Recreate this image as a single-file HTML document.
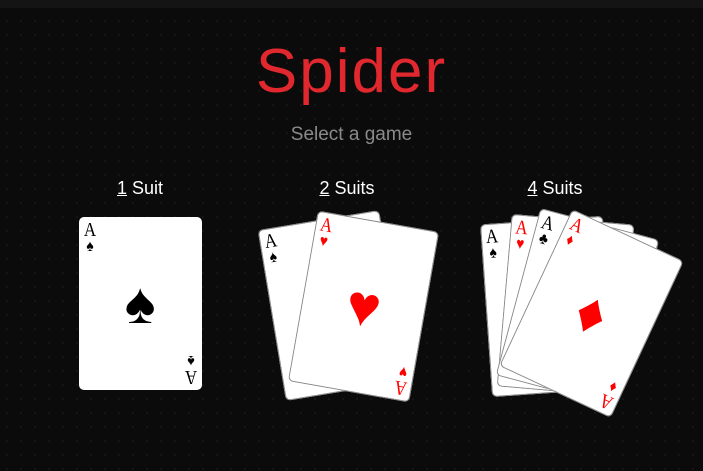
<!DOCTYPE html>
<html><head><meta charset="utf-8"><style>
html,body{margin:0;padding:0}
body{width:703px;height:471px;background:#0b0b0b;position:relative;overflow:hidden;font-family:"Liberation Sans",sans-serif;
background-image:radial-gradient(#161616 1px,transparent 1.2px);background-size:14px 14px}
.top{position:absolute;left:0;top:0;width:703px;height:8px;background:#141414}
h1{position:absolute;left:0;width:703px;top:36px;margin:0;text-align:center;color:#e0282e;font-size:62px;font-weight:normal;letter-spacing:2px}
.sub{position:absolute;left:0;width:703px;top:124px;text-align:center;color:#8a8a8a;font-size:19px}
.lbl{position:absolute;top:178px;width:140px;text-align:center;color:#fff;font-size:18px}
.lbl u{text-decoration:underline}
.card{position:absolute;width:123px;height:173px;margin-left:-61.5px;margin-top:-86.5px;background:#fff;border-radius:5px;box-shadow:0 0 0 1px #888 inset}
.c{position:absolute;left:3px;top:4px;font-family:"Liberation Serif",serif;font-size:20px;line-height:18px;text-align:center;width:16px;transform:scaleX(0.85)}
.c span{display:block;font-size:16px;line-height:16px}
.c.b{left:auto;top:auto;right:3px;bottom:4px;transform:rotate(180deg) scaleX(0.85)}
.m{position:absolute;left:0;top:0;width:123px;height:173px;line-height:173px;text-align:center;font-size:58px}
.r{color:#f00}.k{color:#000}
</style></head><body>
<div class="top"></div>
<h1>Spider</h1>
<div class="sub">Select a game</div>
<div class="lbl" style="left:70px"><u>1</u> Suit</div>
<div class="lbl" style="left:277px"><u>2</u> Suits</div>
<div class="lbl" style="left:485px"><u>4</u> Suits</div>

<div class="card k" style="left:140px;top:303.5px;box-shadow:none"><div class="c">A<span>♠</span></div><div class="m">♠</div><div class="c b">A<span>♠</span></div></div>

<div class="card k" style="left:332px;top:305px;transform:rotate(-9.4deg)"><div class="c">A<span>♠</span></div><div class="m">♠</div><div class="c b">A<span>♠</span></div></div>
<div class="card r" style="left:363px;top:306px;transform:rotate(10deg)"><div class="c">A<span>♥</span></div><div class="m">♥</div><div class="c b">A<span>♥</span></div></div>

<div class="card k" style="left:547px;top:306px;transform:rotate(-4deg)"><div class="c">A<span>♠</span></div><div class="m">♠</div><div class="c b">A<span>♠</span></div></div>
<div class="card r" style="left:565px;top:305px;transform:rotate(5deg)"><div class="c">A<span>♥</span></div><div class="m">♥</div><div class="c b">A<span>♥</span></div></div>
<div class="card k" style="left:577px;top:307px;transform:rotate(15deg)"><div class="c">A<span>♣</span></div><div class="m">♣</div><div class="c b">A<span>♣</span></div></div>
<div class="card r" style="left:591px;top:313px;transform:rotate(25deg)"><div class="c">A<span>♦</span></div><div class="m">♦</div><div class="c b">A<span>♦</span></div></div>
</body></html>
